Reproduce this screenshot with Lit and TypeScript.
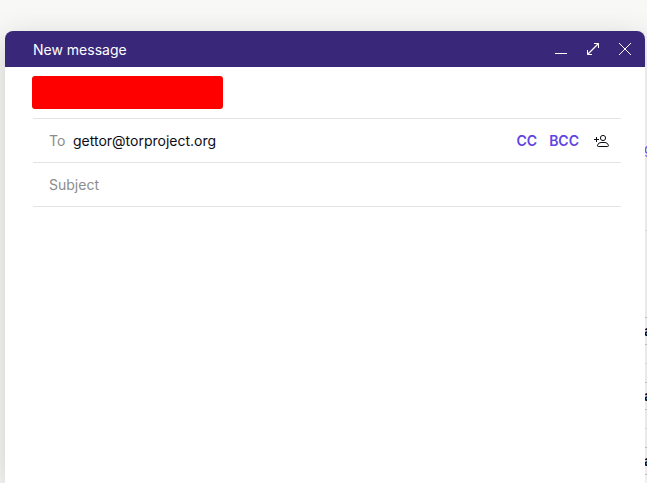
import { LitElement, html, css } from "lit";
import { customElement, state } from "lit/decorators.js";

@customElement("mail-backdrop")
class MailBackdrop extends LitElement {
  static styles = css`
    :host {
      display: flex;
      justify-content: flex-end;
      background: #f8f8f6;
      overflow: hidden;
      font: 14px/20px Inter, "Liberation Sans", sans-serif;
    }
    .pane {
      width: 3px;
      margin-top: 65px;
      overflow: hidden;
      background: #fff;
    }
    .message {
      height: 166px;
      box-sizing: border-box;
      padding-top: 74px;
      border-bottom: 1px solid #eaeaea;
    }
    .message a {
      color: #6d4aff;
    }
    .spacer {
      height: 86px;
    }
    .row {
      height: 46px;
      border-bottom: 1px solid #eaeaea;
      margin-bottom: 18px;
    }
    .label {
      height: 26px;
      line-height: 26px;
      border: 1px solid #d1cfcd;
      border-width: 1px 0;
      font-weight: 700;
      color: #0c0c14;
    }
  `;

  render() {
    return html`
      <div class="pane">
        <div class="message"><a href="#">g</a></div>
        <div class="spacer"></div>
        ${[0, 1, 2].map(() => html`<div class="row"><div class="label">a</div></div>`)}
      </div>
    `;
  }
}

@customElement("mail-composer")
class MailComposer extends LitElement {
  static styles = css`
    :host {
      display: flex;
      flex-direction: column;
      background: #fff;
      border-radius: 8px 8px 0 0;
      box-shadow: 0 8px 32px rgba(0, 0, 0, 0.18);
      font: 14px/20px Inter, "Liberation Sans", sans-serif;
      color: #0c0c14;
    }
    header {
      display: flex;
      align-items: center;
      height: 36px;
      padding: 0 4px 0 28px;
      border-radius: 8px 8px 0 0;
      background: #39277a;
      color: #fff;
    }
    h1 {
      flex: 1;
      margin: 0;
      padding-top: 2px;
      font-size: 14px;
      font-weight: 400;
    }
    button {
      display: flex;
      align-items: center;
      justify-content: center;
      margin: 0;
      padding: 0;
      border: 0;
      background: none;
      color: inherit;
      font: inherit;
    }
    .tool {
      width: 32px;
      height: 36px;
    }
    svg {
      display: block;
      fill: none;
      stroke: currentColor;
    }
    form {
      margin: 0 24px 0 28px;
    }
    .field {
      display: flex;
      align-items: center;
      height: 43px;
      padding: 0 12px 0 16px;
      border-bottom: 1px solid #e6e4e1;
    }
    .sender {
      height: 51px;
      padding: 0;
    }
    .redacted {
      width: 191px;
      height: 33px;
      margin-left: -1px;
      border-radius: 3px;
      background: #f00;
    }
    label {
      width: 24px;
      color: #8c8c8c;
    }
    input {
      flex: 1;
      min-width: 0;
      padding: 0;
      border: 0;
      outline: 0;
      background: none;
      color: inherit;
      font: inherit;
    }
    input::placeholder {
      color: #8c8c8c;
      opacity: 1;
    }
    .actions {
      display: flex;
      align-items: center;
      gap: 12px;
    }
    .copy {
      color: #5f45e2;
      font-weight: 600;
    }
    .contacts {
      margin-left: 2px;
    }
  `;

  @state() private to = "gettor@torproject.org";

  render() {
    return html`
      <header>
        <h1>New message</h1>
        <button class="tool" type="button" aria-label="Minimize">
          <svg width="16" height="16"><path d="M2 12.5h12" /></svg>
        </button>
        <button class="tool" type="button" aria-label="Maximize">
          <svg width="16" height="16">
            <path d="M2.5 9v4.500H7M9 2.500h4.500V7" />
            <path d="M2.500 13.500l11-11" stroke-width="1.300" />
          </svg>
        </button>
        <button class="tool" type="button" aria-label="Close">
          <svg width="16" height="16"><path d="M2 2l12 12M14 2L2 14" /></svg>
        </button>
      </header>
      <form>
        <div class="field sender"><div class="redacted"></div></div>
        <div class="field">
          <label for="to">To</label>
          <input id="to" type="text" .value=${this.to} />
          <div class="actions">
            <button class="copy" type="button">CC</button>
            <button class="copy" type="button">BCC</button>
            <button class="contacts" type="button" aria-label="Insert contacts">
              <svg width="16" height="16">
                <circle cx="10" cy="5" r="2.6" />
                <path d="M1 6.500h5M3.500 4v5" />
                <path d="M5.300 13.500h9.200q1.200 0 .9-1.300Q14.600 9.500 12 9.500H8Q5.400 9.500 4.500 12.200q-.3 1.300 .8 1.300z" />
              </svg>
            </button>
          </div>
        </div>
        <div class="field">
          <input type="text" placeholder="Subject" aria-label="Subject" />
        </div>
      </form>
    `;
  }
}

@customElement("app-root")
class AppRoot extends LitElement {
  static styles = css`
    :host {
      display: grid;
      height: 100vh;
      grid-template: minmax(0, 1fr) / minmax(0, 1fr);
      overflow: hidden;
    }
    mail-backdrop,
    mail-composer {
      grid-area: 1 / 1;
    }
    mail-composer {
      margin: 31px 2px 0 5px;
    }
  `;

  render() {
    return html`<mail-backdrop></mail-backdrop><mail-composer></mail-composer>`;
  }
}
